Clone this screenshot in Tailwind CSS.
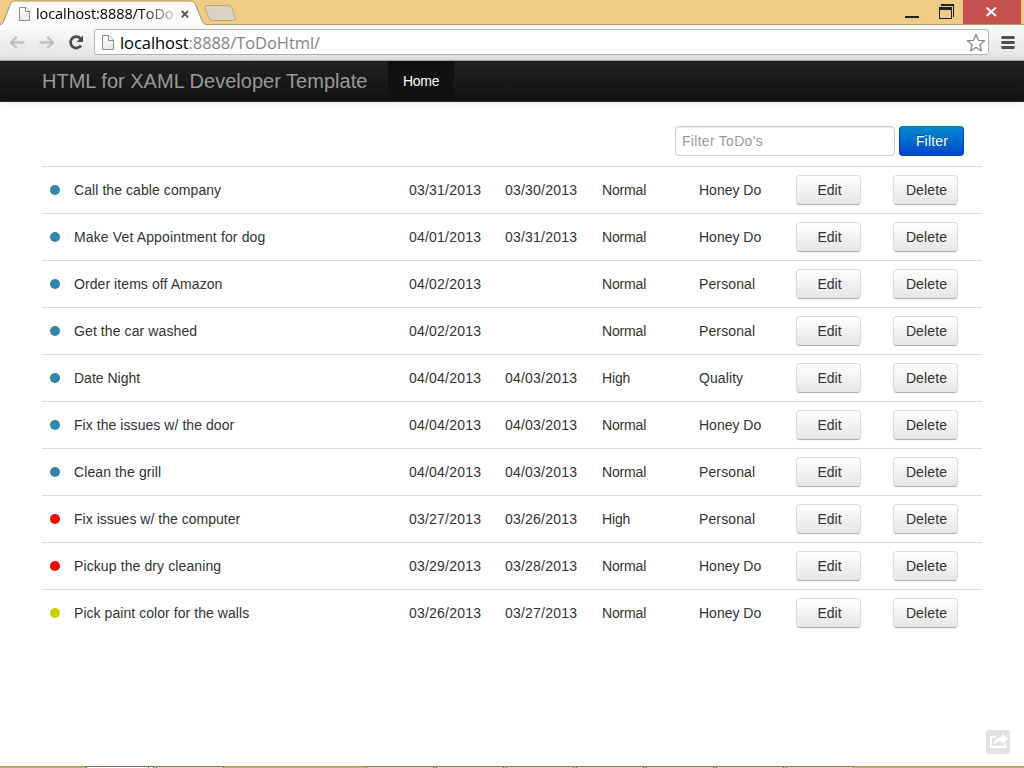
<!DOCTYPE html>
<html lang="en">
<head>
<meta charset="utf-8">
<title>ToDo</title>
<script src="https://cdn.jsdelivr.net/npm/@tailwindcss/browser@4"></script>
</head>
<body class="w-[1024px] h-[768px] overflow-hidden bg-white flex flex-col font-['Liberation_Sans',Arial,sans-serif] text-sm text-[#333]">
  <!-- Title bar with tabs -->
  <header class="relative h-[25px] shrink-0 bg-[#f0cb85] flex">
    <svg class="absolute left-0 top-0" width="1024" height="26" viewBox="0 0 1024 26">
      <defs><linearGradient id="doc" x1="0" y1="0" x2="0" y2="1"><stop offset="0" stop-color="#fff"/><stop offset="1" stop-color="#e8e8e8"/></linearGradient></defs>
      <path d="M0 24.5H1024" stroke="#b59a66"/>
      <path d="M0 26V24.5C2 24.5 3 23 4 20.500L10 5C11 2 12 1 15 1H190C193 1 194.500 2 195.500 4.500L202 20.500C203 23 204 24.500 207 24.500V26Z" fill="#fbfbfb"/>
      <path d="M0 24.500C2 24.500 3 23 4 20.500L10 5C11 2 12 1 15 1H190C193 1 194.500 2 195.500 4.500L202 20.500C203 23 204 24.500 207 24.500" fill="none" stroke="#b08f55"/>
      <path d="M207 5.500H228.500Q231 5.500 232 8L235.500 18Q236 20.500 233.500 20.500H212.500Q210 20.500 209 18L205 8Q204.500 5.500 207 5.500Z" fill="#d8d2c6" stroke="#c4a870"/>
      <path d="M19.500 7.500H26L29.500 11V20.500H19.500Z" fill="url(#doc)" stroke="#8e8e8e"/><path d="M25.500 7.500V11.500H29.500" fill="#fff" stroke="#8e8e8e"/>
      <path d="M181.700 11L188 17.300M188 11L181.700 17.300" stroke="#555" stroke-width="1.800"/>
    </svg>
    <div class="relative ml-9 w-[139px] h-[25px] leading-[27px] overflow-hidden whitespace-nowrap font-['Open_Sans',sans-serif] text-[14.500px] tracking-[-0.080px] text-transparent bg-clip-text bg-linear-to-r from-black from-75% to-transparent to-105%">localhost:8888/ToDo</div>
    <svg class="relative ml-auto" width="144" height="25" viewBox="880 0 144 25" shape-rendering="crispEdges">
      <path d="M905 16H919V18H905Z" fill="#222"/>
      <path d="M941 4H954V17H953V6H941Z" fill="#222"/><rect x="939.500" y="7.500" width="12" height="11" fill="#f0cb85" stroke="#222"/><path d="M939 7H952V10H939Z" fill="#222"/>
      <path d="M963 0H1021V24H963Z" fill="#c75050"/>
      <path d="M986.500 7.500L996 16M996 7.500L986.500 16" stroke="#fff" stroke-width="2" shape-rendering="auto"/>
    </svg>
  </header>
  <!-- Address bar -->
  <div class="h-[36px] shrink-0 bg-linear-to-b from-[#fbfbfb] to-[#e2e2e2] border-b border-[#a4aaa2] flex items-center">
    <svg class="shrink-0" width="94" height="35" viewBox="0 25 94 35">
      <g fill="none" stroke="#c0c0c0" stroke-width="2.400" stroke-linecap="round" stroke-linejoin="round"><path d="M12 42.500H23.500M16 37.500L11 42.500L16 47.500"/><path d="M40.500 42.500H52M48 37.500L53 42.500L48 47.500"/></g>
      <path d="M80.500 38.500A5.700 5.700 0 1 0 81 45.500" fill="none" stroke="#4c4c4c" stroke-width="2.800"/><path d="M83 35.500V42H76.500Z" fill="#4c4c4c"/>
    </svg>
    <div class="w-[895px] h-[26px] -mt-px rounded-[3px] border border-[#b4b4b4] bg-white flex items-center shrink-0">
      <svg class="ml-[6px] mt-px" width="14" height="18" viewBox="0 0 14 18"><path d="M1.500 1.500H8L12.500 6V15.500H1.500Z" fill="url(#doc)" stroke="#8e8e8e"/><path d="M7.500 1.500V6.500H12.500" fill="#fff" stroke="#8e8e8e"/></svg>
      <div class="ml-[5px] mt-[2px] w-[300px] whitespace-nowrap font-['Open_Sans',sans-serif] text-[16.500px] leading-6 tracking-[-0.070px] text-[#858585]"><span class="text-black">localhost</span>:8888/ToDoHtml/</div>
      <svg class="ml-auto mr-[2px] mt-px" width="20" height="20" viewBox="0 0 20 20"><path d="M10 1.500L12.400 7.300L18.500 7.700L13.800 11.700L15.300 17.800L10 14.500L4.700 17.800L6.200 11.700L1.500 7.700L7.600 7.300Z" fill="#fff" stroke="#888" stroke-width="1.300" stroke-linejoin="round"/></svg>
    </div>
    <svg class="ml-[11.500px]" width="14" height="15" viewBox="0 0 14 15"><path d="M1.500 2.500H12.500M1.500 7.500H12.500M1.500 12.500H12.500" stroke="#505050" stroke-width="2.800" stroke-linecap="round"/></svg>
  </div>
  <!-- Page navigation -->
  <nav class="h-[41px] shrink-0 bg-linear-to-b from-[#222] to-[#111] border-b border-[#252525] flex pl-[42px] shadow-[0_1px_10px_rgba(0,0,0,0.1)]">
    <div data-w="327" data-size="20" class="w-[346px] text-xl leading-[40px] text-[#999] whitespace-nowrap"><span>HTML for XAML Developer Template</span></div>
    <div data-w="36" class="w-[66px] bg-[#111] shadow-[inset_0_3px_8px_rgba(0,0,0,0.125)] text-white leading-[40px] pl-[15px]"><span>Home</span></div>
  </nav>
  <main class="w-[940px] ml-[42px] pt-6 grow">
    <div class="flex justify-end gap-1 pr-[18px] mb-[10px]">
      <div data-w="81" class="w-[220px] h-[30px] rounded border border-[#ccc] bg-white px-[6px] leading-7 text-[#999] shadow-[inset_0_1px_1px_rgba(0,0,0,0.075)]"><span>Filter ToDo's</span></div>
      <button data-w="32" class="w-[65px] h-[30px] rounded border border-[#0044cc] border-t-[#0077c0] border-b-[#002a80]/60 bg-linear-to-b from-[#0088cc] to-[#0044cc] text-white leading-7 pl-px [text-shadow:0_-1px_0_rgba(0,0,0,0.25)]"><span>Filter</span></button>
    </div>
    <div id="rows"></div>
  </main>
  <svg class="absolute left-[986px] top-[730px]" width="24" height="24" viewBox="0 0 24 24"><rect width="24" height="24" rx="3" fill="#e3e3e3"/><path d="M10 7H5V17H19V13.500" fill="none" stroke="#fff" stroke-width="2"/><path d="M16 4L22 9L16 14V11.500C12.500 11 10 12 8 14.500C8.500 9.500 11.500 7 16 6.700Z" fill="#fff"/></svg>
  <footer class="h-[2px] shrink-0 bg-[#c8ab76] border-t border-[#b89d6c] relative">
    <svg class="absolute left-0 -top-px" width="1024" height="2" viewBox="0 0 1024 2" shape-rendering="crispEdges">
      <path d="M86 0H154V2H86Z" fill="#7c6a48"/><path d="M87 1H148V2H87ZM149 1H153V2H149Z" fill="#fff"/>
      <path d="M156 0h68v2h-68zM366 0h68v2h-68zM436 0h68v2h-68zM506 0h68v2h-68zM576 0h68v2h-68zM646 0h68v2h-68zM716 0h68v2h-68zM786 0h68v2h-68z" fill="#8f7c5a"/>
      <path d="M157 1h66v1h-66zM367 1h66v1h-66zM437 1h66v1h-66zM507 1h66v1h-66zM577 1h66v1h-66zM647 1h66v1h-66zM717 1h66v1h-66zM787 1h66v1h-66z" fill="#ead2b4"/>
    </svg>
  </footer>
<script>
const blue = 'bg-[#2f87ab]', red = 'bg-[#ff0000]', green = 'bg-[#c8d200]';
const todos = [
  [blue, 'Call the cable company', 147, '03/31/2013', '03/30/2013', 'Normal', 'Honey Do'],
  [blue, 'Make Vet Appointment for dog', 192, '04/01/2013', '03/31/2013', 'Normal', 'Honey Do'],
  [blue, 'Order items off Amazon', 149, '04/02/2013', '', 'Normal', 'Personal'],
  [blue, 'Get the car washed', 123, '04/02/2013', '', 'Normal', 'Personal'],
  [blue, 'Date Night', 66, '04/04/2013', '04/03/2013', 'High', 'Quality'],
  [blue, 'Fix the issues w/ the door', 160, '04/04/2013', '04/03/2013', 'Normal', 'Honey Do'],
  [blue, 'Clean the grill', 87, '04/04/2013', '04/03/2013', 'Normal', 'Personal'],
  [red, 'Fix issues w/ the computer', 166, '03/27/2013', '03/26/2013', 'High', 'Personal'],
  [red, 'Pickup the dry cleaning', 147, '03/29/2013', '03/28/2013', 'Normal', 'Honey Do'],
  [green, 'Pick paint color for the walls', 175, '03/26/2013', '03/27/2013', 'Normal', 'Honey Do'],
];
const widths = { Normal: 44, High: 28, 'Honey Do': 62, Personal: 56, Quality: 44, Edit: 24, Delete: 41 };
const cell = (t, w) => `<div class="whitespace-nowrap" data-w="${w || 72}"><span>${t}</span></div>`;
const btn = t => `<button data-w="${widths[t]}" class="w-[65px] h-[30px] rounded border border-[#dcdcdc] border-b-[#b3b3b3] bg-linear-to-b from-white to-[#e6e6e6] leading-7 pl-[2px] shadow-[0_1px_2px_rgba(0,0,0,0.05)]"><span>${t}</span></button>`;
document.getElementById('rows').innerHTML = todos.map(([c, t, w, a, b, p, k]) =>
  `<div class="h-[47px] border-t border-[#ddd] pl-2 grid grid-cols-[24px_335px_96px_97px_97px_97px_97px_81px] items-center">
    <i class="size-[10px] rounded-full ${c}"></i>${cell(t, w)}${cell(a)}${cell(b)}${cell(p, widths[p])}${cell(k, widths[k])}${btn('Edit')}${btn('Delete')}</div>`).join('');
// Distribute letter spacing so each label fills its nominal width.
const ctx = document.createElement('canvas').getContext('2d');
document.querySelectorAll('[data-w]').forEach(el => {
  const s = el.firstElementChild, n = s.textContent.length;
  ctx.font = `${el.dataset.size || 14}px "Liberation Sans"`;
  if (n) s.style.letterSpacing = (+el.dataset.w + 0.2 - ctx.measureText(s.textContent).width) / n + 'px';
});
</script>
</body>
</html>
